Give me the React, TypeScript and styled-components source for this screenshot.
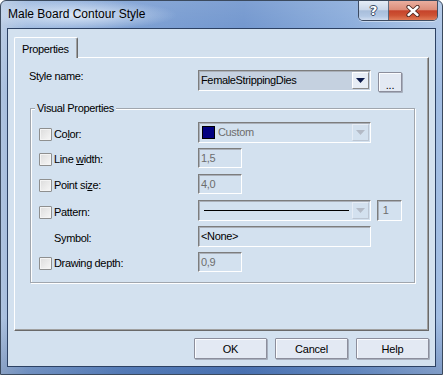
import React from 'react';
import styled, { createGlobalStyle } from 'styled-components';

const BG = '#d3e1ef';

const Global = createGlobalStyle`
  html, body { margin: 0; padding: 0; background: #ffffff; }
  body { font-family: "Liberation Sans", Arial, sans-serif; }
  #root { width: 443px; height: 375px; }
`;

const Window = styled.div`
  box-sizing: border-box;
  width: 443px;
  height: 375px;
  border: 1px solid #3b4a5e;
  border-radius: 6px 6px 0 0;
  display: flex;
  flex-direction: column;
  overflow: hidden;
  background:
    radial-gradient(ellipse 100px 15px at 76px 14px, rgba(222, 233, 247, 0.95), rgba(222, 233, 247, 0) 100%),
    linear-gradient(to bottom, rgba(255, 255, 255, 0.22), rgba(255, 255, 255, 0) 25%, rgba(0, 0, 0, 0) 85%, rgba(20, 50, 110, 0.25) 100%),
    linear-gradient(to right, #aec3df 0%, #8eaeda 6%, #6790cc 28%, #5a85c6 55%, #79a0d6 80%, #a3bee3 100%);
`;

const TitleBar = styled.div`
  height: 27px;
  flex: none;
  display: flex;
  align-items: flex-start;
`;

const TitleText = styled.div`
  padding-left: 7px;
  font-family: "Liberation Sans", Arial, sans-serif;
  font-size: 12px;
  line-height: 27px;
  color: #000;
`;

const CaptionGroup = styled.div`
  display: flex;
  margin-left: auto;
  margin-right: 4px;
  height: 19px;
  border: 1px solid rgba(38, 48, 66, 0.8);
  border-top: none;
  border-radius: 0 0 5px 5px;
  overflow: hidden;
  box-shadow: 0 1px 0 rgba(255, 255, 255, 0.45);
`;

const CaptionButton = styled.div<{ $variant: 'help' | 'close' }>`
  display: flex;
  align-items: center;
  justify-content: center;
  width: ${(p) => (p.$variant === 'close' ? '48px' : '29px')};
  background: ${(p) =>
    p.$variant === 'close'
      ? 'linear-gradient(#eaae9f 0%, #dd8e7a 45%, #c6432b 52%, #cd5233 75%, #e07a57 100%)'
      : 'linear-gradient(#e4ecf6 0%, #cbd8ea 45%, #a8bedb 52%, #b3c8e4 80%, #d0ddf0 100%)'};
  border-right: ${(p) => (p.$variant === 'help' ? '1px solid rgba(38, 48, 66, 0.65)' : 'none')};
`;

const HelpGlyph = styled.span`
  font-family: "DejaVu Sans", sans-serif;
  font-weight: bold;
  font-size: 13px;
  line-height: 13px;
  color: #fff;
  text-shadow: -1px 0 #3b4a64, 1px 0 #3b4a64, 0 -1px #3b4a64, 0 1px #3b4a64;
`;

const Client = styled.div`
  box-sizing: border-box;
  height: 339px;
  flex: none;
  margin: 0 6px;
  border: 1px solid #2c4163;
  background: ${BG};
  display: flex;
  flex-direction: column;
  padding: 8px 6px 7px 6px;
`;

const TabStrip = styled.div`
  height: 20px;
  display: flex;
  align-items: flex-end;
`;

const Tab = styled.div`
  box-sizing: border-box;
  position: relative;
  z-index: 1;
  width: 64px;
  height: 21px;
  margin-bottom: -1px;
  background: ${BG};
  border-top: 1px solid #fff;
  border-left: 1px solid #fff;
  border-right: 1px solid #696969;
  border-radius: 2px 2px 0 0;
  box-shadow: inset -1px 0 0 #a0a0a0;
  padding: 5px 0 0 7px;
  font-size: 11px;
  line-height: 13px;
  letter-spacing: -0.35px;
  color: #000;
`;

const Panel = styled.div`
  box-sizing: border-box;
  height: 274px;
  flex: none;
  border: 1px solid;
  border-color: #fff #696969 #696969 #fff;
  box-shadow: inset -1px -1px 0 #a0a0a0;
  padding: 12px 12px 0 15px;
  display: flex;
  flex-direction: column;
`;

const Text = styled.span<{ $muted?: boolean }>`
  font-size: 11px;
  line-height: 13px;
  letter-spacing: -0.35px;
  color: ${(p) => (p.$muted ? '#6d6d6d' : '#000')};
  white-space: nowrap;
`;

const StyleRow = styled.div`
  display: grid;
  grid-template-columns: 168px 173px 31px;
  height: 21px;
  align-items: start;
`;

const StyleLabel = styled(Text)`
  margin-left: -1px;
`;

const GroupBox = styled.fieldset`
  box-sizing: border-box;
  width: 385px;
  margin: 11px 0 0 0;
  padding: 7px 8px 10px 8px;
  border: 1px solid #a0a6ae;
  box-shadow: 1px 1px 0 #fff, inset 1px 1px 0 #fff;
  display: flex;
  flex-direction: column;
  gap: 6px;
`;

const Legend = styled.legend`
  margin-left: -4px;
  padding: 0 2px;
  background: ${BG};
  font-size: 11px;
  line-height: 13px;
  letter-spacing: -0.35px;
  color: #000;
`;

const FieldRow = styled.div`
  display: grid;
  grid-template-columns: 159px auto 1fr;
  height: 20px;
  align-items: center;
`;

const CheckLabel = styled.div<{ $indent?: boolean }>`
  display: flex;
  align-items: center;
  gap: 2px;
  padding-left: ${(p) => (p.$indent ? '15px' : '0')};
  padding-top: 3px;
`;

const CheckBox = styled.span`
  box-sizing: border-box;
  width: 13px;
  height: 13px;
  flex: none;
  border: 1px solid #8e8f8f;
  border-radius: 1px;
  background: linear-gradient(135deg, #dcdcdc, #f7f7f7);
  box-shadow: inset 0 0 0 1px #f4f4f4;
`;

const Field = styled.div<{ $w: number; $h?: number; $tone?: 'dark'; $gap?: number }>`
  box-sizing: border-box;
  width: ${(p) => p.$w}px;
  height: ${(p) => p.$h ?? 20}px;
  margin-left: ${(p) => p.$gap ?? 0}px;
  align-self: start;
  display: flex;
  align-items: center;
  padding-left: 2px;
  border: 1px solid;
  border-color: #7d7d7d #fff #fff #7d7d7d;
  box-shadow: inset 1px 1px 0 #a9afb8;
  background: ${(p) => (p.$tone === 'dark' ? '#c5d1e0' : BG)};
  overflow: hidden;
`;

const DropButton = styled.div<{ $enabled?: boolean }>`
  box-sizing: border-box;
  margin-left: auto;
  margin-right: 1px;
  width: 17px;
  height: calc(100% - 2px);
  display: flex;
  align-items: center;
  justify-content: center;
  background: ${(p) => (p.$enabled ? '#e7edf5' : BG)};
  border: 1px solid;
  border-color: ${(p) => (p.$enabled ? '#fff #8a8a8a #8a8a8a #fff' : '#e6edf6 #bcc6d3 #bcc6d3 #e6edf6')};
`;

const Swatch = styled.span`
  box-sizing: border-box;
  width: 13px;
  height: 13px;
  margin: 0 3px 0 1px;
  border: 1px solid #000;
  background: #000080;
  flex: none;
`;

const PatternLine = styled.span`
  width: 145px;
  height: 1px;
  margin-left: 3px;
  background: #000;
  flex: none;
`;

const ButtonRow = styled.div`
  display: flex;
  justify-content: flex-end;
  gap: 8px;
  margin-top: 7px;
`;

const DialogButton = styled.button<{ $w: number; $h?: number }>`
  box-sizing: border-box;
  width: ${(p) => p.$w}px;
  height: ${(p) => p.$h ?? 21}px;
  margin: 0;
  padding: 0;
  border: 1px solid #8c8e9c;
  border-radius: 1px;
  background: #e3e9f3;
  box-shadow: inset 1px 1px 0 #fbfcfe, 1px 1px 0 #a7afbd;
  font-family: "Liberation Sans", Arial, sans-serif;
  font-size: 11px;
  letter-spacing: -0.2px;
  color: #000;
`;

const EllipsisButton = styled(DialogButton)`
  align-self: start;
  margin-top: 2px;
  margin-left: 7px;
  line-height: 20px;
  padding-top: 2px;
`;

const Arrow = ({ color }: { color: string }) => (
  <svg width="9" height="5" viewBox="0 0 9 5">
    <polygon points="0,0 9,0 4.5,5" fill={color} />
  </svg>
);

const CloseGlyph = () => (
  <svg width="14" height="12" viewBox="0 0 14 12">
    <path d="M2.5 2 L11.5 10 M11.5 2 L2.5 10" stroke="#4a2620" strokeWidth="4.2" strokeLinecap="round" />
    <path d="M2.5 2 L11.5 10 M11.5 2 L2.5 10" stroke="#ffffff" strokeWidth="2.4" strokeLinecap="round" />
  </svg>
);

const U = styled.span`
  text-decoration: underline;
`;

type Row = {
  label: React.ReactNode;
  check: boolean;
  control: React.ReactNode;
  extra?: React.ReactNode;
};

export default function App() {
  const rows: Row[] = [
    {
      label: <>Co<U>l</U>or:</>,
      check: true,
      control: (
        <Field $w={173} $h={21}>
          <Swatch />
          <Text $muted>Custom</Text>
          <DropButton><Arrow color="#b3bac6" /></DropButton>
        </Field>
      ),
    },
    {
      label: <>Line <U>w</U>idth:</>,
      check: true,
      control: <Field $w={44}><Text $muted>1,5</Text></Field>,
    },
    {
      label: <>Point si<U>z</U>e:</>,
      check: true,
      control: <Field $w={44}><Text $muted>4,0</Text></Field>,
    },
    {
      label: <>Pattern:</>,
      check: true,
      control: (
        <Field $w={173} $h={21}>
          <PatternLine />
          <DropButton><Arrow color="#b3bac6" /></DropButton>
        </Field>
      ),
      extra: <Field $w={25} $h={21} $gap={6}><Text $muted>&nbsp;1</Text></Field>,
    },
    {
      label: <>Symbol:</>,
      check: false,
      control: <Field $w={173} $h={21}><Text>&lt;None&gt;</Text></Field>,
    },
    {
      label: <>Drawing depth:</>,
      check: true,
      control: <Field $w={44}><Text $muted>0,9</Text></Field>,
    },
  ];

  return (
    <>
      <Global />
      <Window>
        <TitleBar>
          <TitleText>Male Board Contour Style</TitleText>
          <CaptionGroup>
            <CaptionButton $variant="help"><HelpGlyph>?</HelpGlyph></CaptionButton>
            <CaptionButton $variant="close"><CloseGlyph /></CaptionButton>
          </CaptionGroup>
        </TitleBar>
        <Client>
          <TabStrip>
            <Tab>Properties</Tab>
          </TabStrip>
          <Panel>
            <StyleRow>
              <StyleLabel>Style name:</StyleLabel>
              <Field $w={173} $h={21} $tone="dark">
                <Text>FemaleStrippingDies</Text>
                <DropButton $enabled><Arrow color="#0c1a4a" /></DropButton>
              </Field>
              <EllipsisButton $w={24} $h={20}>...</EllipsisButton>
            </StyleRow>
            <GroupBox>
              <Legend>Visual Properties</Legend>
              {rows.map((r, i) => (
                <FieldRow key={i}>
                  <CheckLabel $indent={!r.check}>
                    {r.check && <CheckBox />}
                    <Text>{r.label}</Text>
                  </CheckLabel>
                  {r.control}
                  {r.extra ?? <span />}
                </FieldRow>
              ))}
            </GroupBox>
          </Panel>
          <ButtonRow>
            <DialogButton $w={73}>OK</DialogButton>
            <DialogButton $w={73}>Cancel</DialogButton>
            <DialogButton $w={73}>Help</DialogButton>
          </ButtonRow>
        </Client>
      </Window>
    </>
  );
}
